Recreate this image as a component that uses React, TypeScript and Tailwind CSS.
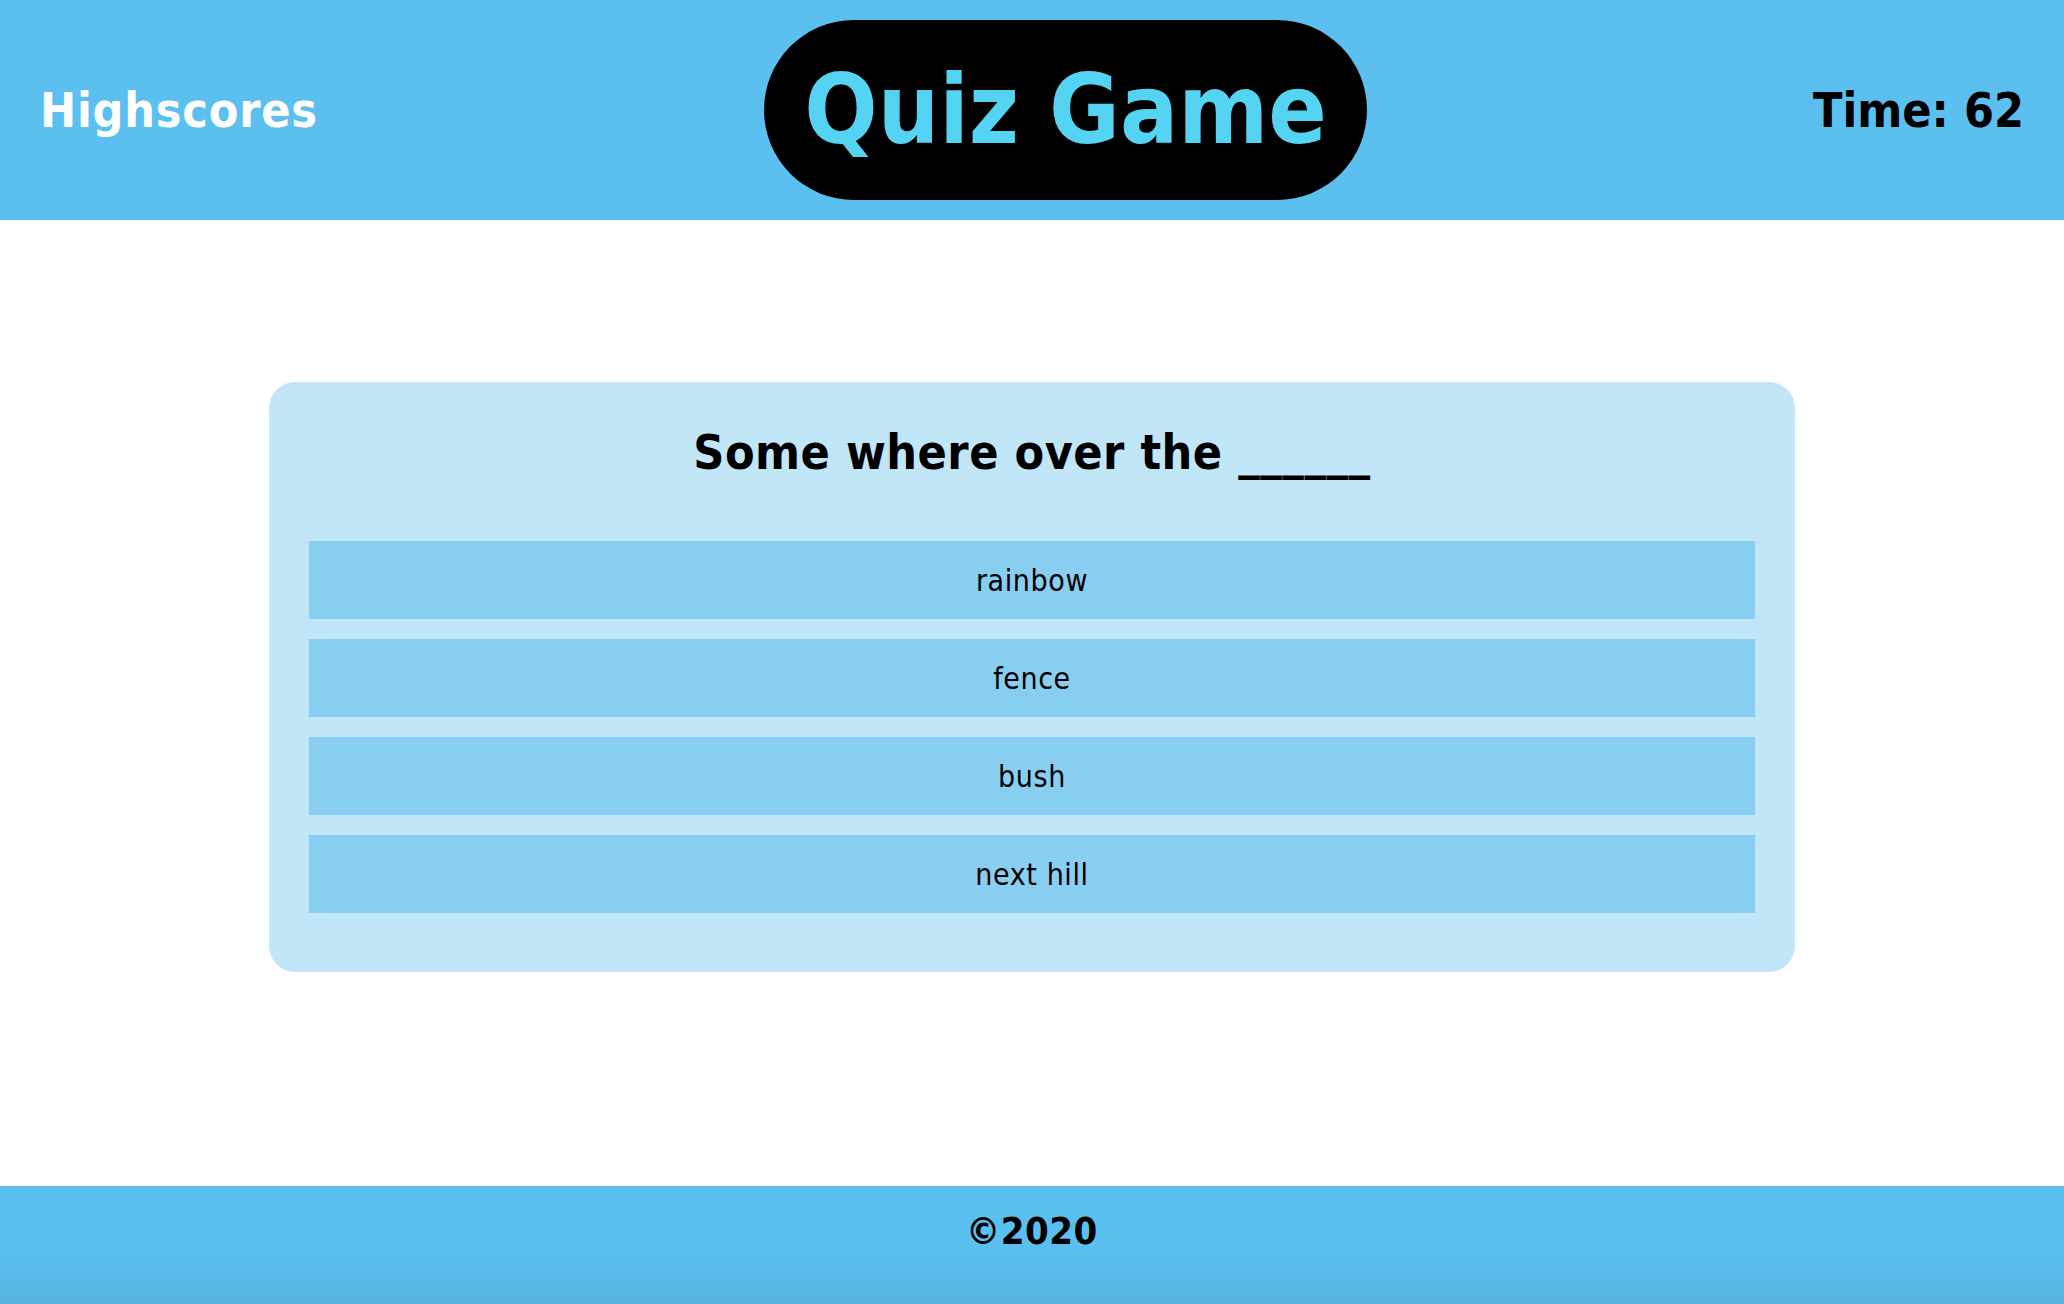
const answers = ['rainbow', 'fence', 'bush', 'next hill'];

export default function App() {
  return (
    <div
      className="flex min-h-screen flex-col bg-white text-black"
      style={{ fontFamily: '"DejaVu Sans Condensed", "DejaVu Sans", sans-serif' }}
    >
      {/* Header */}
      <header className="flex h-[220px] shrink-0 items-center justify-between bg-[#5bc0ef] px-[40px]">
        <a href="#" className="text-[48px] font-bold leading-none tracking-[0.8px] text-white">
          Highscores
        </a>
        <h1 className="rounded-full bg-black px-[40px] py-[32px] text-[96px] font-bold leading-[116px] text-[#55d3f2]">
          Quiz Game
        </h1>
        <span className="text-[48px] font-bold leading-none">Time: 62</span>
      </header>

      {/* Quiz */}
      <main className="flex-1 pt-[162px]">
        <div className="mx-auto w-[1526px] rounded-[26px] bg-[#c1e6f8] px-[40px] pt-[42px] pb-[59px]">
          <h2 className="mb-[61px] text-center text-[48px] font-bold leading-[56px] tracking-[0.5px]">
            Some where over the ______
          </h2>
          <div className="flex flex-col gap-[20px]">
            {answers.map((answer) => (
              <button
                key={answer}
                className="flex h-[78px] w-full items-center justify-center bg-[#87cef1] text-[30px] tracking-[0.6px]"
              >
                {answer}
              </button>
            ))}
          </div>
        </div>
      </main>

      {/* Footer */}
      <footer className="flex h-[118px] shrink-0 items-center justify-center bg-gradient-to-b from-[#5bc0ef] from-50% to-[#57b3df] pb-[28px]">
        <span className="text-[38px] font-bold tracking-[0.5px]">©2020</span>
      </footer>
    </div>
  );
}
